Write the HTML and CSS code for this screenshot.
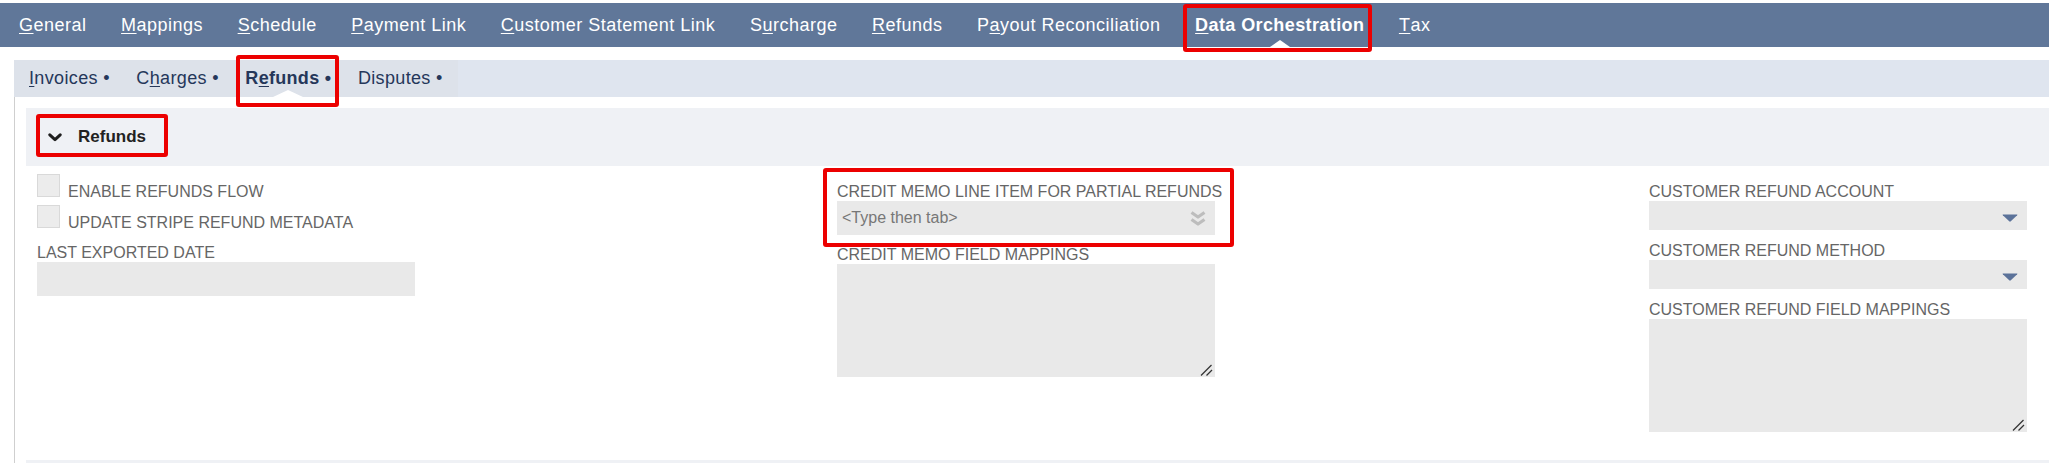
FILE: index.html
```html
<!DOCTYPE html>
<html lang="en">
<head>
<meta charset="utf-8">
<title>Data Orchestration - Refunds</title>
<link rel="stylesheet" href="styles.css">
</head>
<body>
  <nav class="topnav">
    <a class="item"><u>G</u>eneral</a>
    <a class="item"><u>M</u>appings</a>
    <a class="item"><u>S</u>chedule</a>
    <a class="item"><u>P</u>ayment Link</a>
    <a class="item"><u>C</u>ustomer Statement Link</a>
    <a class="item">S<u>u</u>rcharge</a>
    <a class="item"><u>R</u>efunds</a>
    <a class="item">P<u>a</u>yout Reconciliation</a>
    <a class="item active"><u>D</u>ata Orchestration<span class="annot annot-nav"></span></a>
    <a class="item"><u>T</u>ax</a>
  </nav>

  <div class="subbar">
    <div class="subtabs">
      <a class="subtab"><u>I</u>nvoices •</a>
      <a class="subtab">C<u>h</u>arges •</a>
      <a class="subtab active">R<u>e</u>funds •<span class="annot annot-sub"></span></a>
      <a class="subtab">Disputes •</a>
    </div>
  </div>

  <div class="content">
    <section class="sect">
      <div class="sect-head">
        <svg class="chev" width="14" height="9" viewBox="0 0 14 9"><polyline points="1.8,1.8 7,6.6 12.2,1.8" fill="none" stroke="#1e1e1e" stroke-width="3" stroke-linecap="round" stroke-linejoin="round"/></svg>
        <span class="sect-title">Refunds</span>
        <span class="annot annot-head"></span>
      </div>

      <div class="fields">
        <div class="col col1">
          <div class="check-row">
            <span class="checkbox"></span>
            <span class="check-label">ENABLE REFUNDS FLOW</span>
          </div>
          <div class="check-row second">
            <span class="checkbox"></span>
            <span class="check-label">UPDATE STRIPE REFUND METADATA</span>
          </div>
          <div class="label after-checks">LAST EXPORTED DATE</div>
          <div class="input"></div>
        </div>

        <div class="col col2">
          <span class="annot annot-field"></span>
          <div class="label">CREDIT MEMO LINE ITEM FOR PARTIAL REFUNDS</div>
          <div class="input with-icon">
            <span class="placeholder">&lt;Type then tab&gt;</span>
            <svg class="dbl" width="18" height="17" viewBox="0 0 18 17"><polyline points="2.5,2.5 9,7 15.5,2.5" fill="none" stroke="#bdbdbd" stroke-width="3.2" stroke-linejoin="round"/><polyline points="2.5,9.5 9,14 15.5,9.5" fill="none" stroke="#bdbdbd" stroke-width="3.2" stroke-linejoin="round"/></svg>
          </div>
          <div class="label gap-b">CREDIT MEMO FIELD MAPPINGS</div>
          <div class="textarea">
            <svg class="grip" width="13" height="12" viewBox="0 0 13 12"><line x1="1" y1="11.5" x2="11.5" y2="1" stroke="#333" stroke-width="1.2"/><line x1="6.5" y1="11.5" x2="12" y2="6" stroke="#333" stroke-width="1.2"/></svg>
          </div>
        </div>

        <div class="col col3">
          <div class="label">CUSTOMER REFUND ACCOUNT</div>
          <div class="select">
            <svg class="arrow" width="16" height="8" viewBox="0 0 16 8"><path d="M1 0.6 H15 Q15.8 0.6 15.2 1.3 L8.8 7.3 Q8 8 7.2 7.3 L0.8 1.3 Q0.2 0.6 1 0.6 Z" fill="#5b7299"/></svg>
          </div>
          <div class="label gap-c">CUSTOMER REFUND METHOD</div>
          <div class="select">
            <svg class="arrow" width="16" height="8" viewBox="0 0 16 8"><path d="M1 0.6 H15 Q15.8 0.6 15.2 1.3 L8.8 7.3 Q8 8 7.2 7.3 L0.8 1.3 Q0.2 0.6 1 0.6 Z" fill="#5b7299"/></svg>
          </div>
          <div class="label gap-c">CUSTOMER REFUND FIELD MAPPINGS</div>
          <div class="textarea">
            <svg class="grip" width="13" height="12" viewBox="0 0 13 12"><line x1="1" y1="11.5" x2="11.5" y2="1" stroke="#333" stroke-width="1.2"/><line x1="6.5" y1="11.5" x2="12" y2="6" stroke="#333" stroke-width="1.2"/></svg>
          </div>
        </div>
      </div>
    </section>
    <div class="next-sect"></div>
  </div>
</body>
</html>
```

FILE: styles.css
```css
* { box-sizing: border-box; }

html, body {
  margin: 0;
  padding: 0;
  background: #ffffff;
}

body {
  width: 2049px;
  height: 463px;
  overflow: hidden;
  padding-top: 3px;
  font-family: "Liberation Sans", Arial, sans-serif;
}

u { text-decoration-thickness: 1px; text-underline-offset: 2px; }

/* ---------- top navigation ---------- */
.topnav {
  display: flex;
  gap: 34.5px;
  height: 44px;
  padding-left: 19px;
  background: #607799;
}

.topnav .item {
  position: relative;
  display: flex;
  align-items: center;
  color: #ffffff;
  font-size: 18px;
  letter-spacing: 0.5px;
  white-space: nowrap;
}

.topnav .item.active { font-weight: bold; letter-spacing: 0.4px; }

.topnav .item.active::after {
  content: "";
  position: absolute;
  left: 50%;
  bottom: 0;
  margin-left: -10px;
  border-left: 10px solid transparent;
  border-right: 10px solid transparent;
  border-bottom: 7px solid #ffffff;
}

/* ---------- sub tabs ---------- */
.subbar {
  display: flex;
  height: 37px;
  margin: 13px 0 0 14px;
  background: #dfe5ef;
}

.subtabs {
  display: flex;
  gap: 26.5px;
  padding: 0 15px;
  background: #dde2ea;
}

.subtab {
  position: relative;
  display: flex;
  align-items: center;
  color: #25375a;
  font-size: 18px;
  letter-spacing: 0.35px;
  white-space: nowrap;
}

.subtab.active { font-weight: bold; letter-spacing: 0.3px; }

.subtab.active::after {
  content: "";
  position: absolute;
  left: 50%;
  bottom: 0;
  margin-left: -15px;
  border-left: 15px solid transparent;
  border-right: 15px solid transparent;
  border-bottom: 7px solid #ffffff;
}

/* ---------- annotation boxes ---------- */
.annot {
  position: absolute;
  border: 4px solid #ec0000;
  border-radius: 3px;
  pointer-events: none;
}

.annot-nav  { left: -12px; top: 1px;  width: 189px; height: 48px; }
.annot-sub  { left: -9px;  top: -5px; width: 103px; height: 52px; }
.annot-head { left: 10px;  top: 6px;  width: 132px; height: 43px; }
.annot-field{ left: -14px; top: -6px; width: 411px; height: 79px; }

/* ---------- content ---------- */
.content {
  height: 366px;
  overflow: hidden;
  margin-left: 14px;
  padding: 11px 0 0 11px;
  border-left: 1px solid #cfcfcf;
}

.sect-head {
  position: relative;
  display: flex;
  align-items: center;
  height: 58px;
  padding-left: 22px;
  background: #eff1f5;
}

.chev { display: block; }

.sect-title {
  margin-left: 16px;
  color: #222222;
  font-size: 17px;
  font-weight: bold;
}

.fields {
  display: grid;
  grid-template-columns: 800px 812px 1fr;
  padding: 8px 0 28px 11px;
}

.col {
  position: relative;
  display: flex;
  flex-direction: column;
}

.col2, .col3 { padding-top: 9px; }

.label,
.check-label {
  color: #666666;
  font-size: 16px;
  line-height: 18px;
  white-space: nowrap;
}

.check-row {
  display: flex;
  align-items: flex-start;
  gap: 8px;
}

.check-row.second { margin-top: 4px; }

.checkbox {
  flex: none;
  width: 23px;
  height: 23px;
  background: #ececec;
  border: 1px solid #d9d9d9;
}

.check-label { margin-top: 9px; }

.after-checks { margin-top: 12px; }
.gap-b { margin-top: 11px; }
.gap-c { margin-top: 12px; }

.input,
.select,
.textarea {
  position: relative;
  width: 378px;
  background: #e9e9e9;
}

.input { height: 34px; }

.with-icon {
  display: flex;
  align-items: center;
  justify-content: space-between;
  padding: 0 8px 0 5px;
}

.placeholder {
  color: #777777;
  font-size: 16px;
}

.dbl { display: block; }

.select {
  height: 29px;
  display: flex;
  justify-content: flex-end;
  align-items: flex-start;
  padding: 13px 9px 0 0;
}

.arrow { display: block; }

.textarea { height: 113px; }

.grip {
  position: absolute;
  right: 2px;
  bottom: 1px;
}

.next-sect {
  height: 40px;
  background: #eff1f5;
}
```
